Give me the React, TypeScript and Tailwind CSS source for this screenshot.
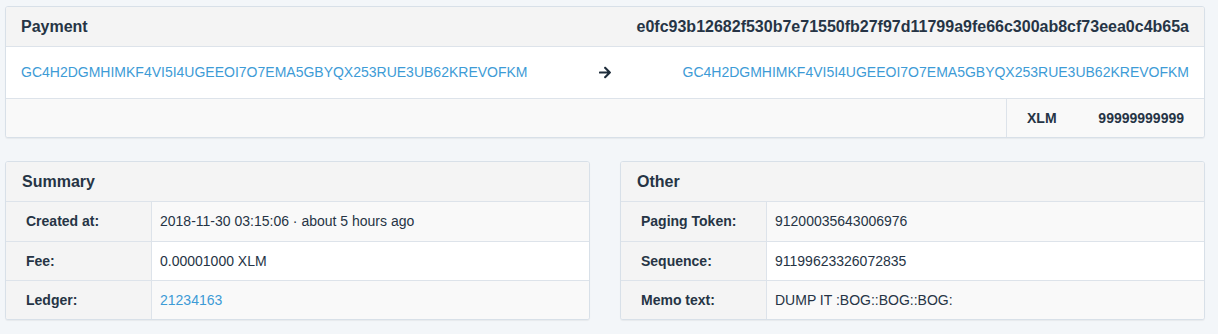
import React from "react";

const ADDR = "GC4H2DGMHIMKF4VI5I4UGEEOI7O7EMA5GBYQX253RUE3UB62KREVOFKM";

function Arrow() {
  return (
    <svg width="12" height="13" viewBox="0 0 448 480" fill="#1f2d3b">
      <path d="M190.5 50.9l22.2-22.2c9.4-9.4 24.6-9.4 33.9 0L441 223c9.4 9.4 9.4 24.6 0 33.9L246.6 451.3c-9.4 9.4-24.6 9.4-33.9 0l-22.2-22.2c-9.5-9.5-9.3-25 .4-34.3L311.4 280H24c-13.3 0-24-10.7-24-24v-32c0-13.3 10.7-24 24-24h287.4L190.9 85.2c-9.8-9.3-10-24.8-.4-34.3z" />
    </svg>
  );
}

type Row = { label: string; value: React.ReactNode };

function DetailPanel({ title, rows }: { title: string; rows: Row[] }) {
  return (
    <div className="w-[585px] border border-[#d8e0e8] rounded-[3px] bg-white shadow-[0_1px_1px_rgba(0,0,0,0.05)] overflow-hidden">
      <div className="h-[40px] bg-[#f4f4f4] border-b border-[#dde3ea] px-[16px] flex items-center text-[16px] font-bold text-[#263445]">
        {title}
      </div>
      {rows.map((r, i) => (
        <div
          key={r.label}
          className={`flex h-[39px] ${i > 0 ? "border-t border-[#dde3ea]" : ""}`}
        >
          <div className="w-[146px] shrink-0 bg-[#f4f4f4] border-r border-[#dde3ea] pl-[20px] flex items-center text-[14px] font-bold text-[#263445]">
            {r.label}
          </div>
          <div
            className={`flex-1 pl-[8px] flex items-center text-[14px] text-[#263445] ${
              i % 2 === 0 ? "bg-[#f9f9f9]" : "bg-white"
            }`}
          >
            {r.value}
          </div>
        </div>
      ))}
    </div>
  );
}

export default function App() {
  return (
    <div
      className="min-h-[334px] bg-[#f3f6f9] pt-[6px] pl-[5px]"
      style={{ fontFamily: '"Liberation Sans", Arial, sans-serif' }}
    >
      <div className="w-[1200px]">
        <div className="border border-[#d8e0e8] rounded-[3px] bg-white shadow-[0_1px_1px_rgba(0,0,0,0.05)] overflow-hidden">
          <div className="h-[40px] bg-[#f4f4f4] border-b border-[#dde3ea] px-[15px] flex items-center justify-between text-[16px] font-bold text-[#263445]">
            <span>Payment</span>
            <span>e0fc93b12682f530b7e71550fb27f97d11799a9fe66c300ab8cf73eea0c4b65a</span>
          </div>
          <div className="h-[52px] bg-white border-b border-[#dde3ea] px-[15px] flex items-center justify-between text-[14px] text-[#3d9bd6]">
            <span>{ADDR}</span>
            <Arrow />
            <span>{ADDR}</span>
          </div>
          <div className="h-[38px] bg-[#f9f9f9] flex justify-end">
            <div className="w-[198px] border-l border-[#dde3ea] flex items-center pl-[20px] pr-[20px] justify-between text-[14px] font-bold text-[#263445]">
              <span>XLM</span>
              <span>99999999999</span>
            </div>
          </div>
        </div>
        <div className="mt-[23px] flex gap-[30px]">
          <DetailPanel
            title="Summary"
            rows={[
              { label: "Created at:", value: "2018-11-30 03:15:06 · about 5 hours ago" },
              { label: "Fee:", value: "0.00001000 XLM" },
              { label: "Ledger:", value: <span className="text-[#3d9bd6]">21234163</span> },
            ]}
          />
          <DetailPanel
            title="Other"
            rows={[
              { label: "Paging Token:", value: "91200035643006976" },
              { label: "Sequence:", value: "91199623326072835" },
              { label: "Memo text:", value: "DUMP IT :BOG::BOG::BOG:" },
            ]}
          />
        </div>
      </div>
    </div>
  );
}
